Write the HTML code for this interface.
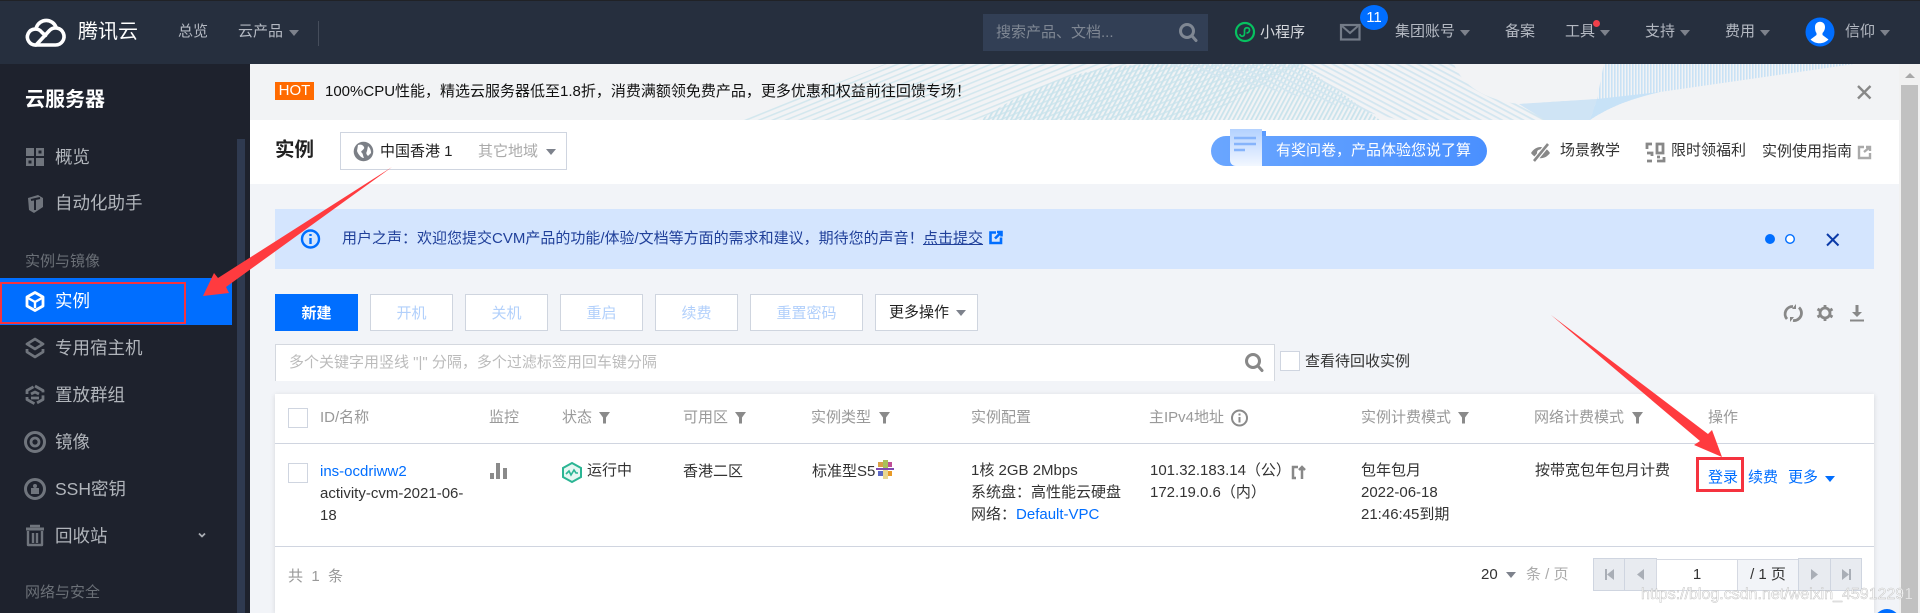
<!DOCTYPE html>
<html lang="zh"><head><meta charset="utf-8"><title>云服务器</title>
<style>
html,body{margin:0;padding:0;width:1920px;height:613px;overflow:hidden;background:#f2f4f8}
body{position:relative;font-family:"Liberation Sans","Noto Sans CJK SC",sans-serif;font-size:15px;color:#333}
div,span,a{position:absolute;box-sizing:border-box}
.t{white-space:nowrap;line-height:20px;height:20px}
.n{color:#b4b9c2}
.s{font-size:17.5px;color:#b1b5bb;line-height:24px;height:24px}
.g{color:#6b7077}
.h{color:#999}
.b{top:294px;height:37px;border:1px solid #cfd5df;background:#fff;text-align:center;line-height:38px;color:#b2d0fb}
.c{width:0;height:0;border-left:5px solid transparent;border-right:5px solid transparent;border-top:6px solid #7d828c}
.k{background:#fff;border:1px solid #cfd5e0}
.p{top:558px;height:33px;background:#e8ebf0;border:1px solid #cfd5e0}
.l{color:#006eff}
</style></head><body>

<div style="left:0;top:0;width:1920px;height:64px;background:#262f3e;border-top:1px solid #202226"></div>
<div style="left:0;top:64px;width:250px;height:549px;background:#1e222d"></div>
<div style="left:237px;top:139px;width:8px;height:474px;background:#2f3a50"></div>

<span class="t" style="left:78px;top:20px;font-size:20px;line-height:24px;height:24px;color:#fff">腾讯云</span>
<span class="t n" style="left:178px;top:22px">总览</span>
<span class="t n" style="left:238px;top:22px">云产品</span><span class="c" style="left:289px;top:30px"></span>
<div style="left:318px;top:21px;width:1px;height:25px;background:#454d5b"></div>
<div style="left:983px;top:14px;width:225px;height:37px;background:#323f55"></div>
<span class="t" style="left:996px;top:23px;color:#7f8793">搜索产品、文档...</span>
<span class="t" style="left:1260px;top:23px;color:#d5d8dd">小程序</span>
<span class="t n" style="left:1395px;top:22px">集团账号</span><span class="c" style="left:1460px;top:30px"></span>
<span class="t n" style="left:1505px;top:22px">备案</span>
<span class="t n" style="left:1565px;top:22px">工具</span><span class="c" style="left:1600px;top:30px"></span>
<div style="left:1593px;top:20px;width:7px;height:7px;border-radius:50%;background:#f0404a"></div>
<span class="t n" style="left:1645px;top:22px">支持</span><span class="c" style="left:1680px;top:30px"></span>
<span class="t n" style="left:1725px;top:22px">费用</span><span class="c" style="left:1760px;top:30px"></span>
<span class="t n" style="left:1845px;top:22px">信仰</span><span class="c" style="left:1880px;top:30px"></span>
<div style="left:1360px;top:5px;width:28px;height:25px;border-radius:50%;background:#006eff;color:#fff;text-align:center;line-height:25px;font-size:15px">11</div>

<span class="t" style="left:25px;top:88px;font-size:20px;line-height:24px;height:24px;font-weight:bold;color:#fff">云服务器</span>
<span class="t s" style="left:55px;top:145px">概览</span>
<span class="t s" style="left:55px;top:191px">自动化助手</span>
<span class="t g" style="left:25px;top:252px">实例与镜像</span>
<div style="left:0;top:278px;width:232px;height:47px;background:#006eff"></div>
<div style="left:0;top:282px;width:186px;height:42px;border:2.5px solid #f5333f"></div>
<span class="t s" style="left:55px;top:289px;color:#fff">实例</span>
<span class="t s" style="left:55px;top:336px">专用宿主机</span>
<span class="t s" style="left:55px;top:383px">置放群组</span>
<span class="t s" style="left:55px;top:430px">镜像</span>
<span class="t s" style="left:55px;top:477px">SSH密钥</span>
<span class="t s" style="left:55px;top:524px">回收站</span>
<span class="t g" style="left:25px;top:583px">网络与安全</span>

<div style="left:250px;top:64px;width:1649px;height:56px;background:#f2f3f5"></div>
<svg style="position:absolute;left:0;top:0" width="1920" height="613" viewBox="0 0 1920 613">
<defs>
<pattern id="a" width="7" height="5" patternUnits="userSpaceOnUse" patternTransform="rotate(-22)"><rect width="7" height="1.600" fill="#d3e7ee"/></pattern>
<pattern id="d" width="5" height="5" patternUnits="userSpaceOnUse" patternTransform="rotate(28)"><rect width="5" height="1.800" fill="#d3e6f0"/></pattern>
<pattern id="e" width="4" height="4" patternUnits="userSpaceOnUse" patternTransform="rotate(-62)"><rect width="4" height="1.800" fill="#c9e3ec"/></pattern>
<pattern id="f" width="3" height="3" patternUnits="userSpaceOnUse"><rect width="1.600" height="3" fill="#c9e2f5"/></pattern>
<linearGradient id="dg" x1="0" y1="0" x2="0" y2="1"><stop offset="0" stop-color="#b3d1ff"/><stop offset="1" stop-color="#f2f7ff"/></linearGradient>
<clipPath id="w"><rect x="250" y="64" width="1649" height="56"/></clipPath>
</defs>
<g clip-path="url(#w)">
<path d="M742 120L885 64H1300L1200 120Z" fill="url(#a)"/>
<path d="M980 120C1030 85 1090 64 1160 64H1300L1380 120Z" fill="url(#e)"/>
<path d="M1160 64H1454C1462 85 1485 100 1519 104L1597 99L1590 120H1400Z" fill="url(#d)"/>
<path d="M1519 104L1597 99L1590 120H1545Z" fill="#cfe4f5"/>
<path d="M1604 64H1854L1660 92C1625 100 1605 110 1590 120L1597 99C1600 85 1602 72 1604 64Z" fill="url(#f)"/>
<path d="M1597 99L1660 92C1625 100 1605 110 1590 120Z" fill="#c7e2f7"/>
</g>
</svg>

<div style="left:275px;top:82px;width:39px;height:18px;background:#ff6a00;color:#fff;text-align:center;line-height:18px">HOT</div>
<span class="t" style="left:325px;top:82px;color:#111">100%CPU性能，精选云服务器低至1.8折，消费满额领免费产品，更多优惠和权益前往回馈专场！</span>

<div style="left:250px;top:120px;width:1649px;height:64px;background:#fff"></div>
<span class="t" style="left:275px;top:138px;font-size:19.5px;line-height:24px;height:24px;font-weight:bold;color:#222">实例</span>
<div class="k" style="left:340px;top:132px;width:227px;height:38px"></div>
<span class="t" style="left:380px;top:142px;color:#222">中国香港 1</span>
<span class="t" style="left:478px;top:142px;color:#aaa">其它地域</span>
<span class="c" style="left:546px;top:149px"></span>
<div style="left:1211px;top:136px;width:276px;height:30px;border-radius:15px;background:linear-gradient(90deg,#6aa6ff,#4a90ff)"></div>
<span class="t" style="left:1276px;top:141px;color:#fff">有奖问卷，产品体验您说了算</span>
<span class="t" style="left:1560px;top:141px">场景教学</span>
<span class="t" style="left:1671px;top:141px">限时领福利</span>
<span class="t" style="left:1762px;top:142px">实例使用指南</span>

<div style="left:275px;top:209px;width:1599px;height:60px;background:#d4e5fe"></div>
<span class="t" style="left:342px;top:229px;color:#20409a">用户之声：欢迎您提交CVM产品的功能/体验/文档等方面的需求和建议，期待您的声音！</span>
<span class="t" style="left:923px;top:229px;color:#20409a;text-decoration:underline">点击提交</span>

<div class="b" style="left:275px;width:83px;background:#006eff;border:0;color:#fff;font-weight:bold;line-height:40px">新建</div>
<div class="b" style="left:370px;width:83px">开机</div>
<div class="b" style="left:465px;width:83px">关机</div>
<div class="b" style="left:560px;width:83px">重启</div>
<div class="b" style="left:655px;width:83px">续费</div>
<div class="b" style="left:750px;width:113px">重置密码</div>
<div class="b" style="left:875px;width:103px;color:#222;text-align:left;padding-left:13px;line-height:35px">更多操作</div>
<span class="c" style="left:956px;top:310px"></span>

<div style="left:275px;top:344px;width:1000px;height:37px;background:#fff;border:1px solid #d4d8df;border-bottom:0"></div>
<span class="t" style="left:289px;top:353px;color:#bbb">多个关键字用竖线 "|" 分隔，多个过滤标签用回车键分隔</span>
<div class="k" style="left:1280px;top:351px;width:20px;height:20px"></div>
<span class="t" style="left:1305px;top:352px">查看待回收实例</span>

<div style="left:275px;top:394px;width:1599px;height:219px;background:#fff;box-shadow:0 1px 5px rgba(0,0,0,.12)"></div>
<div style="left:275px;top:443px;width:1599px;height:1px;background:#d0d5e0"></div>
<div style="left:275px;top:546px;width:1599px;height:1px;background:#d0d5e0"></div>
<div class="k" style="left:288px;top:408px;width:20px;height:20px"></div>
<div class="k" style="left:288px;top:463px;width:20px;height:20px"></div>

<span class="t h" style="left:320px;top:408px">ID/名称</span>
<span class="t h" style="left:489px;top:408px">监控</span>
<span class="t h" style="left:562px;top:408px">状态</span>
<span class="t h" style="left:683px;top:408px">可用区</span>
<span class="t h" style="left:811px;top:408px">实例类型</span>
<span class="t h" style="left:971px;top:408px">实例配置</span>
<span class="t h" style="left:1149px;top:408px">主IPv4地址</span>
<span class="t h" style="left:1361px;top:408px">实例计费模式</span>
<span class="t h" style="left:1534px;top:408px">网络计费模式</span>
<span class="t h" style="left:1708px;top:408px">操作</span>

<span class="t l" style="left:320px;top:462px">ins-ocdriww2</span>
<span class="t" style="left:320px;top:484px">activity-cvm-2021-06-</span>
<span class="t" style="left:320px;top:506px">18</span>
<span class="t" style="left:587px;top:461px">运行中</span>
<span class="t" style="left:683px;top:462px">香港二区</span>
<span class="t" style="left:812px;top:462px">标准型S5</span>
<span class="t" style="left:971px;top:461px">1核 2GB 2Mbps</span>
<span class="t" style="left:971px;top:483px">系统盘：高性能云硬盘</span>
<span class="t" style="left:971px;top:505px">网络：<a class="l" style="position:static">Default-VPC</a></span>
<span class="t" style="left:1150px;top:461px">101.32.183.14（公）</span>
<span class="t" style="left:1150px;top:483px">172.19.0.6（内）</span>
<span class="t" style="left:1361px;top:461px">包年包月</span>
<span class="t" style="left:1361px;top:483px">2022-06-18</span>
<span class="t" style="left:1361px;top:505px">21:46:45到期</span>
<span class="t" style="left:1535px;top:461px">按带宽包年包月计费</span>
<span class="t l" style="left:1708px;top:468px">登录</span>
<span class="t l" style="left:1748px;top:468px">续费</span>
<span class="t l" style="left:1788px;top:468px">更多</span>
<span class="c" style="left:1825px;top:476px;border-top-color:#006eff"></span>
<div style="left:1696px;top:457px;width:48px;height:35px;border:3px solid #f5333f"></div>

<span class="t" style="left:288px;top:567px;color:#999">共&nbsp;&nbsp;1&nbsp;&nbsp;条</span>
<span class="t" style="left:1481px;top:565px">20</span>
<span class="c" style="left:1506px;top:572px"></span>
<span class="t" style="left:1526px;top:565px;color:#aaa">条 / 页</span>
<div class="p" style="left:1593px;width:32px"></div>
<div class="p" style="left:1624px;width:33px"></div>
<div style="left:1656px;top:559px;width:82px;height:32px;background:#fff;border:1px solid #d5d9e2;text-align:center;line-height:30px">1</div>
<div style="left:1737px;top:559px;width:62px;height:32px;background:#f2f4f8;border:1px solid #d5d9e2;text-align:center;line-height:30px">/ 1 页</div>
<div class="p" style="left:1798px;width:33px"></div>
<div class="p" style="left:1830px;width:32px"></div>

<div style="left:1899px;top:64px;width:21px;height:549px;background:#f1f1f1"></div>
<div style="left:1901px;top:85px;width:17px;height:528px;background:#c1c1c1"></div>
<div style="left:1904.500px;top:73px;width:0;height:0;border-left:5px solid transparent;border-right:5px solid transparent;border-bottom:5px solid #a8a8a8"></div>
<div style="left:1874px;top:609px;width:26px;height:26px;border-radius:50%;background:#006eff"></div>

<svg style="position:absolute;left:0;top:0" width="1920" height="613" viewBox="0 0 1920 613">
<!-- logo -->
<g fill="none" stroke="#fff" stroke-width="3.600" stroke-linecap="round" stroke-linejoin="round">
<path d="M36 45H55.500A8.500 8.500 0 1 0 49.500 30.500L37 44"/>
<path d="M36 45A8 8 0 1 1 42 32.500L45.500 35.500"/>
<path d="M36.500 27A10.500 10.500 0 0 1 56 27"/>
</g>
<!-- search -->
<g fill="none" stroke="#7f8793" stroke-width="3"><circle cx="1187" cy="31" r="6.500"/><path d="M1192 36l4 4.500" stroke-linecap="round"/></g>
<!-- miniprogram -->
<circle cx="1245" cy="32" r="9" fill="none" stroke="#07c160" stroke-width="2.200"/>
<path d="M1240 34c0 3 4 3 4.500 0v-4c.5-3 5-3 5 0s-3 3-3 3" fill="none" stroke="#07c160" stroke-width="1.700"/>
<!-- mail -->
<rect x="1341" y="25" width="18.500" height="14.500" fill="none" stroke="#737b87" stroke-width="2.200"/>
<path d="M1342 26l8 7 8-7" fill="none" stroke="#737b87" stroke-width="2"/>
<!-- avatar -->
<circle cx="1820" cy="32" r="14.500" fill="#006eff"/>
<path d="M1815 27c0-7 10-7 10 0 0 3-1.500 5-2.500 6v2l6 4.500c-5 5-13 5-18 0l6-4.500v-2c-1-1-1.500-3-1.500-6z" fill="#fff"/>
<!-- sidebar icons -->
<g fill="#70757d">
<rect x="26" y="148" width="8" height="8"/><rect x="36" y="148" width="8" height="8"/><rect x="26" y="158" width="8" height="8"/><rect x="36" y="158" width="8" height="8"/>
<path d="M28 198L38 195L43 198V207L34 213L29 210Z"/>
</g>
<rect x="38.500" y="150.500" width="3" height="3" fill="#1e222d"/><rect x="28.500" y="160.500" width="3" height="3" fill="#1e222d"/>
<path d="M31 200l9-2M35 200v10" stroke="#1e222d" stroke-width="2" fill="none"/>
<g fill="none" stroke="#fff" stroke-width="2.800" stroke-linejoin="round">
<path d="M35 292.500L43 297V306L35 310.500L27 306V297Z"/><path d="M28 298L35 302L42 298M35 302V308" stroke-width="2.400"/>
</g>
<g fill="none" stroke="#70757d" stroke-width="2.800" stroke-linejoin="round">
<path d="M35 339L43 344L35 349L27 344Z"/><path d="M27 349V352L35 357L43 352V349"/>
<path d="M35 386L43 390.500V399.500L35 404L27 399.500V390.500Z" stroke-dasharray="11 3"/><path d="M31 394l4-2 4 2M31 398h8"/>
<circle cx="35" cy="442" r="9.500" stroke-width="3"/><circle cx="35" cy="442" r="4" stroke-width="2.800"/>
<circle cx="35" cy="489" r="9.500" stroke-width="3"/>
<path d="M26 529H44" stroke-width="3"/><path d="M30 526h10M28 531V545H42V531M33 533V543M37 533V543" stroke-width="2.400"/>
<path d="M199 533.500l3 3 3-3" stroke="#a9adb3" stroke-width="1.800"/>
</g>
<rect x="31" y="488" width="8" height="6" fill="#70757d"/><circle cx="35" cy="486" r="2" fill="#70757d"/>
<!-- hot close -->
<path d="M1858 86L1870.500 98.500M1870.500 86L1858 98.500" stroke="#888" stroke-width="2.400"/>
<!-- globe -->
<circle cx="363.500" cy="151.500" r="9.800" fill="#7b7f86"/>
<path d="M358 145c3-1 5 0 6 2s-2 3-3 5c2 1 2 4 3 6-3 0-6-4-7-7zM368 146c2 2 3 4 3 7l-3 3c-2-2-2-3-1-5z" fill="#fff"/>
<!-- eye -->
<path d="M1531 153c5-8 14-8 19 0-5 7-14 7-19 0z" fill="#888"/>
<circle cx="1540" cy="152.500" r="3" fill="#fff"/>
<path d="M1548 144L1534 161" stroke="#fff" stroke-width="5"/>
<path d="M1548 144L1534 161" stroke="#888" stroke-width="2.600"/>
<g fill="none" stroke="#888">
<!-- qr -->
<path d="M1647 149v-5h5M1663 144h-6v9h6zM1647 153h5v3M1647 161h5M1657 161h7v-4M1660 157h-3" stroke-width="2.800"/>
</g>
<!-- external -->
<path d="M1864 147h-5v11h11v-5M1864 152l6-5M1866 147h4v4" fill="none" stroke="#aaa" stroke-width="2.400"/>
<!-- doc on pill -->
<path d="M1230 129H1262V166H1236C1232 166 1230 163 1230 160Z" fill="url(#dg)"/>
<path d="M1262 131h4v5h-4z" fill="#5a9bff"/>
<path d="M1234 138h22M1234 144h22M1234 150h11" stroke="#86b4fb" stroke-width="2.600"/>
<!-- notice -->
<circle cx="310.500" cy="239" r="8.500" fill="none" stroke="#006eff" stroke-width="2.400"/>
<path d="M310.500 238v6M310.500 234v2" stroke="#006eff" stroke-width="2.400"/>
<path d="M996 232.500h-5.500v10.500h10.500v-5.500M995 238.500l6-6M997 232h4.500v4.500" fill="none" stroke="#006eff" stroke-width="2.600"/>
<circle cx="1770" cy="239" r="5" fill="#006eff"/>
<circle cx="1790" cy="239" r="4.300" fill="#fff" stroke="#006eff" stroke-width="1.400"/>
<path d="M1827 234L1838.500 245.500M1838.500 234L1827 245.500" stroke="#0b3aa8" stroke-width="2"/>
<!-- toolbar -->
<g fill="none" stroke="#888" stroke-width="2.800">
<path d="M1787 319a7.500 7.500 0 0 1 6-12.500M1799 307.500a7.500 7.500 0 0 1-6 13"/>
<circle cx="1825" cy="313" r="5"/>
<path d="M1825 305v3M1825 318v3M1817.500 309l2.500 1.500M1830 315.500l2.500 1.500M1832.500 309l-2.500 1.500M1820 315.500l-2.500 1.500" stroke-width="2.800"/>
</g>
<path d="M1796 304v5h-4z" fill="#888"/><path d="M1790 322v-5h4z" fill="#888"/>
<path d="M1850 320.500h14" stroke="#888" stroke-width="2"/>
<path d="M1855.500 305h3v7h3.500l-5 5-5-5h3.500z" fill="#888"/>
<g fill="none" stroke="#888" stroke-width="3"><circle cx="1253" cy="361" r="6.500"/><path d="M1258 366l4 4.500" stroke-linecap="round"/></g>
<!-- filters -->
<g fill="#8a8a8a">
<path d="M599 412h11l-4 5.500v6h-3v-6z"/>
<path d="M735 412h11l-4 5.500v6h-3v-6z"/>
<path d="M879 412h11l-4 5.500v6h-3v-6z"/>
<path d="M1458 412h11l-4 5.500v6h-3v-6z"/>
<path d="M1632 412h11l-4 5.500v6h-3v-6z"/>
<rect x="490" y="473" width="4" height="6"/><rect x="496" y="463" width="4" height="16"/><rect x="503" y="468" width="4" height="11"/>
</g>
<circle cx="1239.500" cy="418" r="7.500" fill="none" stroke="#8a8a8a" stroke-width="2"/>
<path d="M1239.500 417v5.500M1239.500 413.500v2" stroke="#8a8a8a" stroke-width="2"/>
<!-- status -->
<path d="M572 463L581 468V477L572 482L563 477V468Z" fill="#e6f7f2" stroke="#2bb594" stroke-width="2"/>
<path d="M566 474l3-3 2 4 3-5 2 3h2" fill="none" stroke="#2bb594" stroke-width="1.600"/>
<!-- s5 -->
<g><rect x="883" y="460" width="5" height="8" fill="#a9c05a"/><rect x="878" y="462" width="5" height="5" fill="#d9a048"/><rect x="888" y="462" width="4" height="5" fill="#c04f98"/><rect x="876" y="468" width="18" height="2" fill="#7f4bb0"/><rect x="878" y="471" width="5" height="5" fill="#5c68c4"/><rect x="883" y="470" width="5" height="9" fill="#e9d790"/><rect x="888" y="471" width="4" height="5" fill="#e89a28"/></g>
<!-- ip swap -->
<path d="M1298 467h-5v11h3M1302 479v-12M1299 470l3-3 3 3" fill="none" stroke="#888" stroke-width="2.500"/>
<!-- pagination arrows -->
<g fill="#a9aeb6">
<rect x="1605" y="569" width="2" height="11"/><path d="M1614 569v11l-7-5.500z"/>
<path d="M1644 569v11l-7-5.500z"/>
<path d="M1811 569v11l7-5.500z"/>
<path d="M1842 569v11l7-5.500z"/><rect x="1849" y="569" width="2" height="11"/>
</g>
<!-- red arrows -->
<path d="M392 167L226 287L229 293L203 296L214 273L218 278Z" fill="#ff3b3f"/>
<path d="M1551 315L1708 434L1712 430L1722 457L1694 445L1700 441Z" fill="#ff3b3f"/>
<text x="1641" y="599" font-family="Liberation Sans,sans-serif" font-size="16" fill="#fff" stroke="#bdbdbd" stroke-width=".5" opacity=".9">https://blog.csdn.net/weixin_45912291</text>
</svg>
</body></html>
